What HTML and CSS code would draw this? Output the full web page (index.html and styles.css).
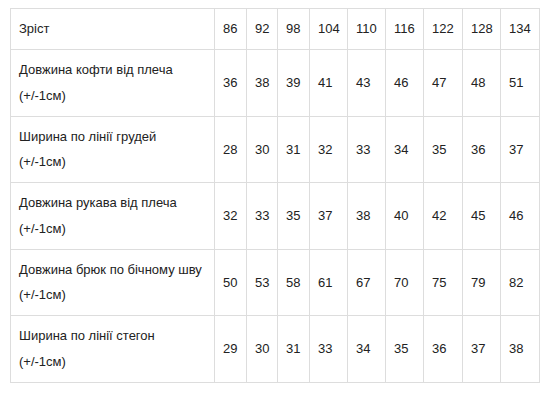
FILE: index.html
```html
<!DOCTYPE html>
<html lang="uk">
<head>
<meta charset="utf-8">
<link rel="stylesheet" href="styles.css">
</head>
<body>
<table class="sizes">
  <colgroup>
    <col class="w-lbl"><col class="w-32"><col class="w-31"><col class="w-32"><col class="w-38"><col class="w-38"><col class="w-38"><col class="w-39"><col class="w-38"><col class="w-39">
  </colgroup>
  <tbody>
    <tr class="head"><td>Зріст</td><td>86</td><td>92</td><td>98</td><td>104</td><td>110</td><td>116</td><td>122</td><td>128</td><td>134</td></tr>
    <tr><td>Довжина кофти від плеча<br>(+/-1см)</td><td>36</td><td>38</td><td>39</td><td>41</td><td>43</td><td>46</td><td>47</td><td>48</td><td>51</td></tr>
    <tr><td>Ширина по лінії грудей<br>(+/-1см)</td><td>28</td><td>30</td><td>31</td><td>32</td><td>33</td><td>34</td><td>35</td><td>36</td><td>37</td></tr>
    <tr><td>Довжина рукава від плеча<br>(+/-1см)</td><td>32</td><td>33</td><td>35</td><td>37</td><td>38</td><td>40</td><td>42</td><td>45</td><td>46</td></tr>
    <tr><td>Довжина брюк по бічному шву<br>(+/-1см)</td><td>50</td><td>53</td><td>58</td><td>61</td><td>67</td><td>70</td><td>75</td><td>79</td><td>82</td></tr>
    <tr><td>Ширина по лінії стегон<br>(+/-1см)</td><td>29</td><td>30</td><td>31</td><td>33</td><td>34</td><td>35</td><td>36</td><td>37</td><td>38</td></tr>
  </tbody>
</table>
</body>
</html>
```

FILE: styles.css
```css
html, body {
  margin: 0;
  padding: 0;
  background: #fff;
}
body {
  padding: 8px 0 0 10px;
  font-family: "Liberation Sans", Arial, sans-serif;
  font-size: 13px;
  color: #222;
}
.sizes {
  border-collapse: collapse;
  table-layout: fixed;
  width: 530px;
}
.sizes td {
  border: 1px solid #ddd;
  padding: 7.2px 8px;
  line-height: 25.6px;
  vertical-align: middle;
  white-space: nowrap;
  overflow: hidden;
}
.w-lbl { width: 204px; }
.w-31 { width: 31px; }
.w-32 { width: 32px; }
.w-38 { width: 38px; }
.w-39 { width: 39px; }
```
